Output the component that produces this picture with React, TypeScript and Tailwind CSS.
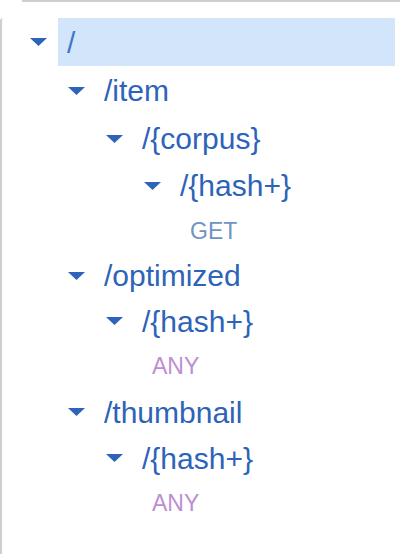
import React from 'react';

type Node = {
  label: string;
  level: number;
  kind: 'path' | 'method';
  method?: 'GET' | 'ANY';
  h: string;
  selected?: boolean;
};

const rows: Node[] = [
  { label: '/', level: 0, kind: 'path', h: 'h-[48px]', selected: true },
  { label: '/item', level: 1, kind: 'path', h: 'h-[49px]' },
  { label: '/{corpus}', level: 2, kind: 'path', h: 'h-[47px]' },
  { label: '/{hash+}', level: 3, kind: 'path', h: 'h-[47px]' },
  { label: 'GET', level: 3, kind: 'method', method: 'GET', h: 'h-[44px]' },
  { label: '/optimized', level: 1, kind: 'path', h: 'h-[45px]' },
  { label: '/{hash+}', level: 2, kind: 'path', h: 'h-[46px]' },
  { label: 'ANY', level: 2, kind: 'method', method: 'ANY', h: 'h-[45px]' },
  { label: '/thumbnail', level: 1, kind: 'path', h: 'h-[46px]' },
  { label: '/{hash+}', level: 2, kind: 'path', h: 'h-[46px]' },
  { label: 'ANY', level: 2, kind: 'method', method: 'ANY', h: 'h-[44px]' },
];

const Caret = () => (
  <svg width="17" height="8" viewBox="0 0 17 8" className="shrink-0">
    <path d="M0 0 H17 L8.5 8 Z" fill="#2d63b8" />
  </svg>
);

const indent = ['pl-[28px]', 'pl-[66px]', 'pl-[104px]', 'pl-[142px]'];
const methodIndent = ['pl-[78px]', 'pl-[115px]', 'pl-[150px]', 'pl-[188px]'];

export default function App() {
  return (
    <div className="w-[420px] h-[554px] bg-white overflow-hidden font-['Liberation_Sans',Arial,sans-serif]">
      <div className="ml-[22px] w-[378px] h-[2px] bg-[#cfcfcf]" />
      <div className="mt-[16px] h-[536px] border-l-2 border-[#cfcfcf] rounded-tl-[3px]">
        {rows.map((r, i) => {
          if (r.kind === 'method') {
            return (
              <div
                key={i}
                className={`${r.h} flex items-center ${methodIndent[r.level]} text-[23px] ${
                  r.method === 'GET' ? 'text-[#6f93c4]' : 'text-[#bb8fd2]'
                }`}
              >
                {r.label}
              </div>
            );
          }
          if (r.selected) {
            return (
              <div key={i} className={`${r.h} flex items-center ${indent[r.level]} mr-[25px]`}>
                <Caret />
                <div className="ml-[11px] flex-1 h-full flex items-center pl-[9px] bg-[#d3e5fb] text-[30px] text-[#3f78c6]">
                  {r.label}
                </div>
              </div>
            );
          }
          return (
            <div key={i} className={`${r.h} flex items-center ${indent[r.level]}`}>
              <Caret />
              <span className="ml-[19px] text-[30px] text-[#2d63b8]">{r.label}</span>
            </div>
          );
        })}
      </div>
    </div>
  );
}
